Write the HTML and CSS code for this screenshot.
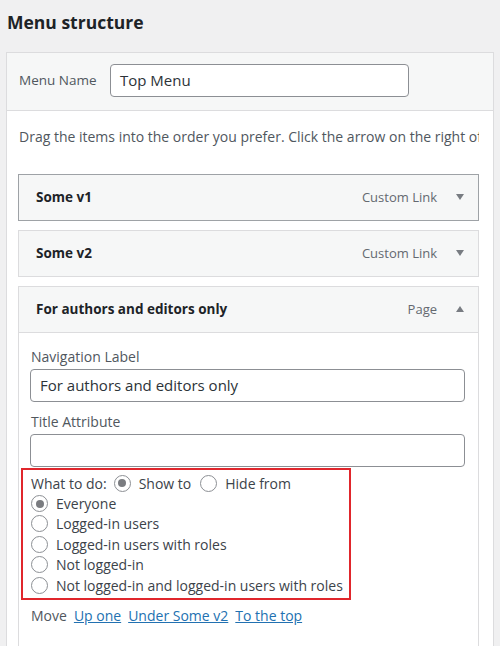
FILE: index.html
```html
<!DOCTYPE html>
<html>
<head>
<meta charset="utf-8">
<link rel="stylesheet" href="styles.css">
</head>
<body>
<h2 class="title">Menu structure</h2>
<div class="menu-box">
  <div class="box-header">
    <label class="name-label">Menu Name</label>
    <div class="name-input">Top Menu</div>
  </div>
  <div class="box-body">
    <p class="drag-hint">Drag the items into the order you prefer. Click the arrow on the right of the item to reveal additional configuration options.</p>
    <div class="item item-focus">
      <div class="item-bar">
        <span class="item-title">Some v1</span>
        <span class="item-type">Custom Link</span>
        <span class="arrow down"></span>
      </div>
    </div>
    <div class="item">
      <div class="item-bar">
        <span class="item-title">Some v2</span>
        <span class="item-type">Custom Link</span>
        <span class="arrow down"></span>
      </div>
    </div>
    <div class="item item-open">
      <div class="item-bar">
        <span class="item-title">For authors and editors only</span>
        <span class="item-type">Page</span>
        <span class="arrow up"></span>
      </div>
      <div class="item-settings">
        <div class="field-label">Navigation Label</div>
        <div class="text-input">For authors and editors only</div>
        <div class="field-label">Title Attribute</div>
        <div class="text-input"></div>
        <div class="visibility">
          <div class="row">
            <span class="row-label">What to do:</span>
            <span class="radio checked"></span><span class="opt gap">Show to</span>
            <span class="radio"></span><span class="opt">Hide from</span>
          </div>
          <div class="row"><span class="radio checked"></span><span class="opt">Everyone</span></div>
          <div class="row"><span class="radio"></span><span class="opt">Logged-in users</span></div>
          <div class="row"><span class="radio"></span><span class="opt">Logged-in users with roles</span></div>
          <div class="row"><span class="radio"></span><span class="opt">Not logged-in</span></div>
          <div class="row"><span class="radio"></span><span class="opt">Not logged-in and logged-in users with roles</span></div>
        </div>
        <div class="move">
          <span class="move-label">Move</span>
          <a href="#" class="move-link">Up one</a>
          <a href="#" class="move-link">Under Some v2</a>
          <a href="#" class="move-link">To the top</a>
        </div>
      </div>
    </div>
  </div>
</div>
</body>
</html>
```

FILE: styles.css
```css
* { box-sizing: border-box; }
html, body { height: 100%; }
body {
  margin: 0;
  background: #f0f0f1;
  font-family: "Open Sans", "Noto Sans", sans-serif;
  font-size: 14px;
  color: #3c434a;
  overflow: hidden;
}
.title {
  margin: 0;
  padding: 10px 0 0 7px;
  height: 52px;
  font-size: 17.5px;
  font-weight: 700;
  color: #1d2327;
  line-height: 24px;
}
.menu-box {
  margin-left: 6px;
  width: 488px;
  height: 600px;
  border: 1px solid #dcdcde;
  border-bottom: none;
  background: #fff;
  overflow: hidden;
}
.box-header {
  height: 58px;
  background: #f6f7f7;
  border-bottom: 1px solid #dcdcde;
  display: flex;
  align-items: center;
  padding-left: 12px;
  padding-bottom: 3px;
}
.name-label {
  color: #50575e;
  font-size: 13.5px;
  width: 91px;
}
.name-input {
  width: 299px;
  height: 33px;
  border: 1px solid #8c8f94;
  border-radius: 4px;
  background: #fff;
  padding-left: 9px;
  font-size: 15px;
  line-height: 31px;
  color: #2c3338;
}
.box-body {
  padding: 16px 14px 0 11px;
}
.drag-hint {
  margin: 0 0 27px 1px;
  white-space: nowrap;
  overflow: hidden;
  color: #50575e;
  line-height: 20px;
  font-size: 14px;
}
.item {
  border: 1px solid #dcdcde;
  background: #f6f7f7;
  margin-bottom: 9px;
}
.item-focus { border-color: #9ea2a6; }
.item-bar {
  height: 45px;
  display: flex;
  align-items: center;
  padding: 0 14px 2px 17px;
}
.item-title {
  font-weight: 700;
  color: #1d2327;
  font-size: 13.5px;
  flex: 1;
}
.item-type {
  color: #646970;
  font-size: 13px;
  margin-right: 19px;
}
.arrow {
  width: 0;
  height: 0;
  border-left: 4px solid transparent;
  border-right: 4px solid transparent;
}
.arrow.down { border-top: 6px solid #787c82; }
.arrow.up { border-bottom: 6px solid #787c82; }
.item-open .item-bar {
  border-bottom: 1px solid #dcdcde;
  height: 46px;
}
.item-settings {
  background: #fff;
  padding: 14px 13px 40px 11px;
}
.field-label {
  color: #50575e;
  font-size: 14px;
  line-height: 20px;
  margin-bottom: 2px;
  margin-left: 1px;
}
.text-input {
  height: 33px;
  border: 1px solid #8c8f94;
  border-radius: 4px;
  padding-left: 9px;
  font-size: 15px;
  line-height: 31px;
  color: #2c3338;
  margin-bottom: 10px;
}
.visibility {
  width: 330px;
  margin-left: -9px;
  margin-top: -9px;
  border: 2px solid #e0262c;
  padding: 3px 0 3px 8px;
}
.row {
  display: flex;
  align-items: center;
  height: 20.4px;
  color: #3c434a;
  font-size: 14px;
  white-space: nowrap;
}
.row-label { margin-right: 7px; }
.radio {
  width: 17px;
  height: 17px;
  border: 1px solid #8c8f94;
  border-radius: 50%;
  background: #fff;
  display: inline-flex;
  align-items: center;
  justify-content: center;
  margin-right: 8px;
  flex: none;
}
.radio.checked::after {
  content: "";
  width: 8px;
  height: 8px;
  border-radius: 50%;
  background: #7a7c80;
}
.opt.gap { margin-right: 9px; }
.move {
  margin-top: 6px;
  margin-left: 1px;
  line-height: 20px;
  font-size: 14px;
  display: flex;
  gap: 7px;
}
.move-label { color: #50575e; }
.move-link {
  color: #2271b1;
  text-decoration: underline;
}
```
